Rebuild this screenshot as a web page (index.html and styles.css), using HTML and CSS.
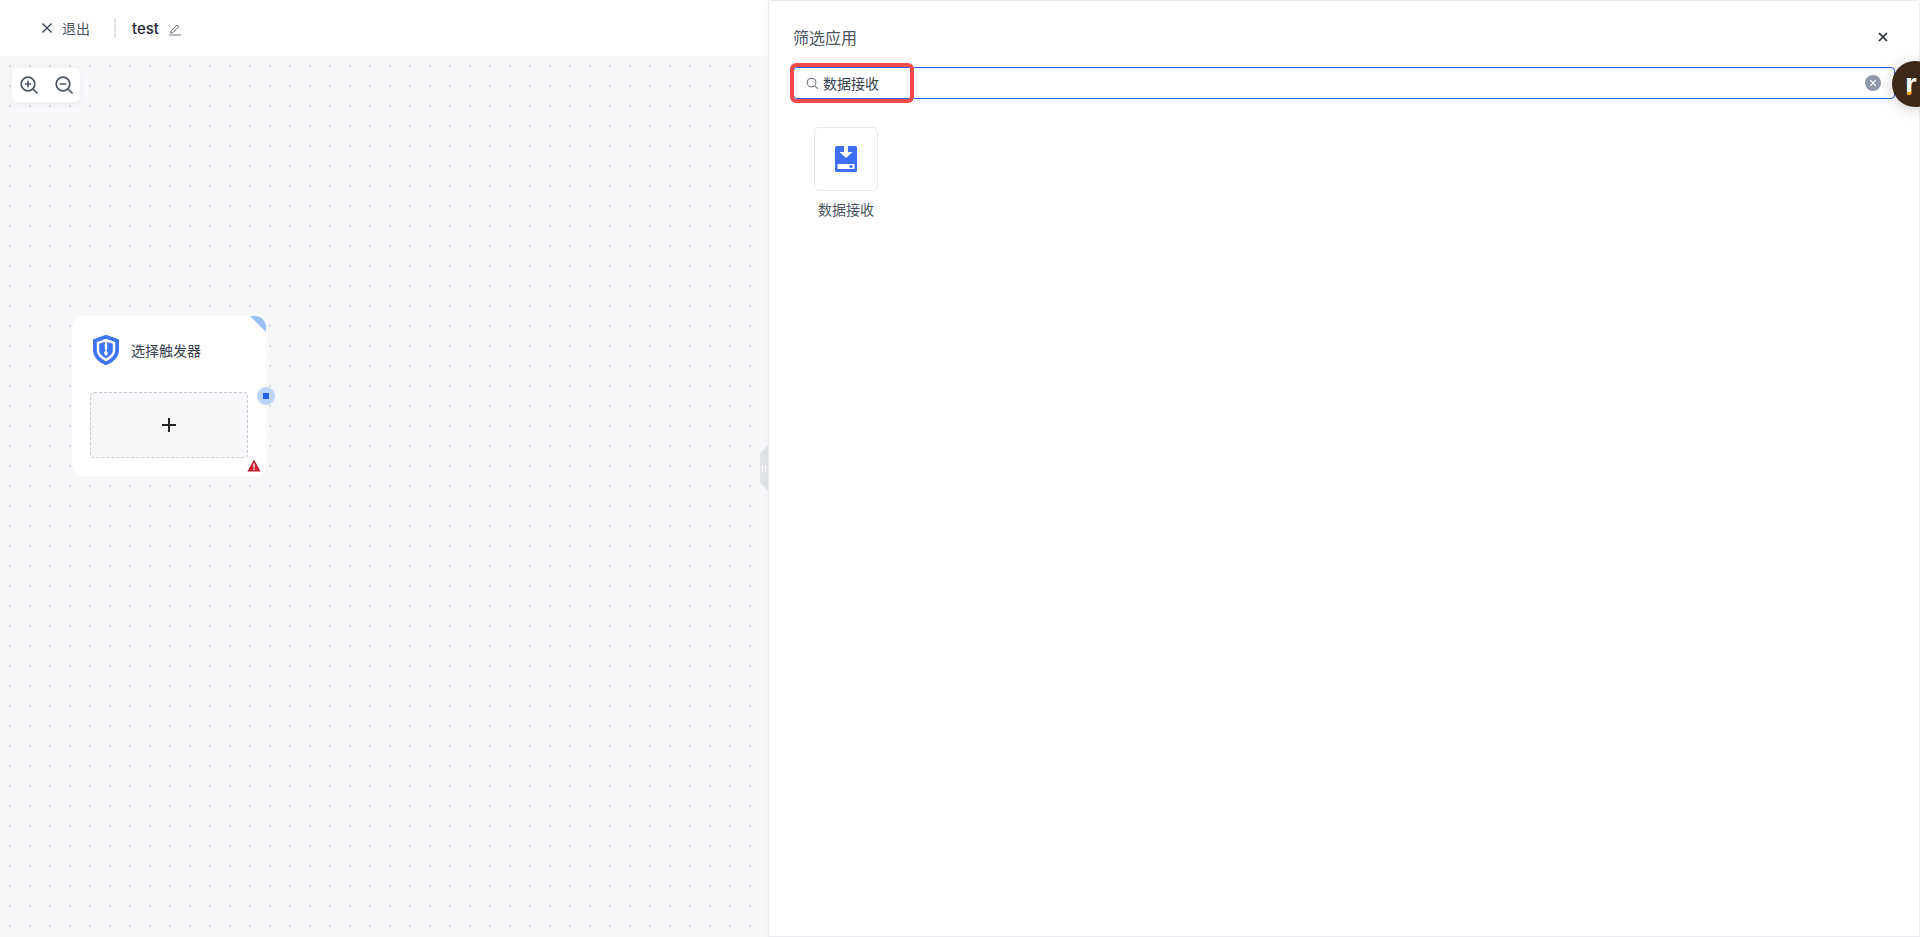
FILE: index.html
```html
<!DOCTYPE html>
<html lang="zh">
<head>
<meta charset="utf-8">
<title>test</title>
<link rel="stylesheet" href="styles.css">
</head>
<body>
<div class="app">
  <div class="editor">
    <header class="topbar">
      <button class="exit">
        <svg class="exit-icon" viewBox="0 0 12 12"><path d="M1.500 1.500l9 9M10.500 1.500l-9 9"/></svg>
        <span>退出</span>
      </button>
      <span class="divider"></span>
      <span class="name">test</span>
      <svg class="edit-icon" viewBox="0 0 14 14"><path d="M3 9.200L9 3l1.800 1.700-6.200 6.100-2 .2zM1 13h12"/></svg>
    </header>
    <main class="canvas">
      <div class="zoom">
        <svg class="zoom-icon" viewBox="0 0 20 20"><circle cx="9" cy="9" r="6.800"/><path d="M14 14l4.500 4.500M9 5.800v6.400M5.800 9h6.400"/></svg>
        <svg class="zoom-icon" viewBox="0 0 20 20"><circle cx="9" cy="9" r="6.800"/><path d="M14 14l4.500 4.500M5.800 9h6.400"/></svg>
      </div>
      <div class="node">
        <span class="node-corner"></span>
        <div class="node-head">
          <svg class="shield" viewBox="0 0 28 32">
            <path class="shield-outer" d="M14 .8l13 4.700v10.500c0 7-5.800 12.300-13 15.300C6.800 28.300 1 23 1 16V5.500z"/>
            <path class="shield-inner" d="M14 4.800l9.200 3.300v8.100c0 5-4.100 8.400-9.200 11.200-5.100-2.800-9.200-6.200-9.200-11.200V8.100z"/>
            <path class="shield-outer" d="M14 7.400l6.800 2.400v6.400c0 3.600-3 6-6.800 8.200-3.800-2.200-6.800-4.600-6.800-8.200V9.800z"/>
            <path class="shield-inner" d="M12.800 7.500h2.400v7.500l-.7 1.800 1.700 3L14 22l-2.200-2.800 1.700-3-.7-1.800z"/>
          </svg>
          <span class="node-title">选择触发器</span>
        </div>
        <div class="node-add">
          <svg class="plus" viewBox="0 0 14 14"><path d="M7 0v14M0 7h14"/></svg>
        </div>
        <span class="port"><span class="port-dot"></span></span>
        <svg class="warn" viewBox="0 0 14 13"><path class="warn-bg" d="M7 .5l6.600 12H.4z"/><path class="warn-mark" d="M6.200 4.500h1.600v4.200H6.200zM6.200 9.500h1.600v1.500H6.200z"/></svg>
      </div>
      <span class="handle"><span class="handle-bars"></span></span>
    </main>
  </div>
  <aside class="panel">
    <div class="panel-head">
      <h2 class="panel-title">筛选应用</h2>
      <svg class="panel-close" viewBox="0 0 10 10"><path d="M1 1l8 8M9 1L1 9"/></svg>
    </div>
    <div class="search">
      <svg class="search-icon" viewBox="0 0 14 14"><circle cx="6" cy="6" r="4.700"/><path d="M9.500 9.500l3.300 3.300"/></svg>
      <span class="search-text">数据接收</span>
      <span class="search-clear">
        <svg viewBox="0 0 10 10"><path d="M1.500 1.500l7 7M8.500 1.500l-7 7"/></svg>
      </span>
      <span class="highlight"></span>
    </div>
    <div class="apps">
      <div class="app-item">
        <span class="app-tile">
          <svg class="app-icon" viewBox="0 0 22 26">
            <rect class="app-icon-bg" width="22" height="26" rx="1.500"/>
            <path class="app-icon-slot" d="M9 0h4v6h4.500L11 12 4.500 6H9z"/>
            <rect class="app-icon-slot" x="2.500" y="18" width="17" height="5"/>
            <rect class="app-icon-bg" x="14.500" y="19.200" width="3" height="2.600"/>
          </svg>
        </span>
        <span class="app-label">数据接收</span>
      </div>
    </div>
    <span class="avatar"><span class="avatar-r">r</span></span>
  </aside>
</div>
</body>
</html>
```
FILE: styles.css
```css
* { box-sizing: border-box; }
html, body { margin: 0; height: 100%; overflow: hidden; }
body {
  font-family: Inter, "Noto Sans CJK SC", "Noto Sans", sans-serif;
  font-size: 14px;
  color: #1f2937;
  background: #fff;
}
svg { display: block; fill: none; }

.app { display: flex; height: 937px; }
.editor { width: 768px; flex: none; display: flex; flex-direction: column; }

.topbar {
  height: 56px;
  flex: none;
  display: flex;
  align-items: center;
  padding: 0 0 0 41px;
  background: #fff;
}
.exit {
  display: flex;
  align-items: center;
  gap: 9px;
  padding: 0;
  border: 0;
  background: none;
  font: inherit;
  color: #4b5563;
}
.exit-icon { width: 12px; height: 12px; stroke: #374151; stroke-width: 1.300; }
.divider { width: 2px; height: 20px; margin: 0 16px 0 24px; background: #e1e4ea; }
.name { font-weight: 500; font-size: 15px; color: #1f2937; }
.edit-icon { width: 14px; height: 14px; margin-left: 9px; margin-top: 2px; stroke: #6b7280; stroke-width: 1; }

.canvas {
  position: relative;
  flex: 1;
  background-color: #f7f8fa;
  background-image: radial-gradient(circle, #dadce1 1px, transparent 1.100px);
  background-size: 20px 20px;
  background-position: 0 0;
}
.zoom {
  position: absolute;
  left: 12px;
  top: 12px;
  width: 68px;
  height: 34px;
  display: flex;
  align-items: center;
  justify-content: space-between;
  padding: 0 6px 0 7px;
  background: #fff;
  border-radius: 5px;
  box-shadow: 0 2px 8px rgba(31, 41, 55, .06);
}
.zoom-icon { width: 20px; height: 20px; stroke: #4b5563; stroke-width: 1.700; }

.node {
  position: absolute;
  left: 72px;
  top: 260px;
  width: 194px;
  height: 160px;
  padding: 18px;
  background: #fff;
  border-radius: 11px;
}
.node-corner {
  position: absolute;
  right: 0;
  top: 0;
  width: 16px;
  height: 16px;
  background: #9ac0f5;
  clip-path: polygon(0 0, 100% 100%, 100% 0);
  border-top-right-radius: 11px;
}
.node-head { display: flex; align-items: center; gap: 10px; height: 32px; padding-left: 1px; }
.shield { width: 30px; height: 32px; flex: none; }
.shield-outer { fill: #3f73f6; }
.shield-inner { fill: #fff; }
.node-title { font-size: 14px; color: #374151; }
.node-add {
  display: flex;
  align-items: center;
  justify-content: center;
  height: 66px;
  margin-top: 26px;
  background: #f7f8fa;
  border: 1px dashed #c9cbd0;
  border-radius: 4px;
}
.plus { width: 14px; height: 14px; stroke: #262626; stroke-width: 2; }
.port {
  position: absolute;
  right: -9px;
  top: 71px;
  width: 18px;
  height: 18px;
  display: flex;
  align-items: center;
  justify-content: center;
  background: #bcd3fb;
  border-radius: 50%;
}
.port-dot { width: 6px; height: 6px; background: #2563eb; }
.warn { position: absolute; right: 5px; bottom: 4px; width: 14px; height: 13px; }
.warn-bg { fill: #c8202f; }
.warn-mark { fill: #fbe3e5; }

.handle {
  position: absolute;
  right: 0;
  top: 389px;
  width: 8px;
  height: 46px;
  display: flex;
  align-items: center;
  justify-content: center;
  background: #e3e5ea;
  clip-path: polygon(100% 0, 100% 100%, 0 82%, 0 18%);
}
.handle-bars { width: 4px; height: 7px; border-left: 1px solid #fff; border-right: 1px solid #fff; }

.panel {
  position: relative;
  flex: 1;
  display: flex;
  flex-direction: column;
  padding: 0 24px 0 24px;
  background: #fff;
  border: 1px solid #e9ebef;
  border-right-color: #f0f1f4;
  border-radius: 3px 3px 0 0;
  box-shadow: -2px 0 6px rgba(31, 41, 55, .04);
}
.panel-head {
  display: flex;
  align-items: center;
  justify-content: space-between;
  height: 66px;
  padding: 10px 7px 4px 0;
  flex: none;
}
.panel-title { margin: 0; font-size: 16px; font-weight: 400; color: #4b5563; }
.panel-close { width: 10px; height: 10px; stroke: #1f2937; stroke-width: 1.700; }

.search {
  position: relative;
  display: flex;
  align-items: center;
  flex: none;
  width: 1102px;
  height: 32px;
  padding: 0 13px 0 12px;
  border: 1px solid #2563eb;
  border-radius: 4px;
}
.search-icon { width: 13px; height: 13px; margin-right: 4px; stroke: #6b7280; stroke-width: 1.100; }
.search-text { flex: 1; font-size: 14px; color: #374151; }
.search-clear {
  display: flex;
  align-items: center;
  justify-content: center;
  width: 16px;
  height: 16px;
  background: #8f98a8;
  border-radius: 50%;
}
.search-clear svg { width: 8px; height: 8px; stroke: #fff; stroke-width: 1.500; }
.highlight {
  position: absolute;
  left: -4px;
  top: -5px;
  width: 124px;
  height: 40px;
  border: 4px solid #f04a4a;
  border-radius: 6px;
}

.apps { display: flex; padding: 28px 0 0 21px; }
.app-item { display: flex; flex-direction: column; align-items: center; width: 64px; gap: 8px; }
.app-tile {
  display: flex;
  align-items: center;
  justify-content: center;
  width: 64px;
  height: 64px;
  border: 1px solid #e9ebef;
  border-radius: 5px;
}
.app-icon { width: 22px; height: 26px; }
.app-icon-bg { fill: #3f6ff6; }
.app-icon-slot { fill: #fff; }
.app-label { font-size: 14px; line-height: 22px; color: #4b5563; white-space: nowrap; }

.avatar {
  position: absolute;
  right: -19px;
  top: 60px;
  width: 46px;
  height: 46px;
  background: #3c2718;
  border-radius: 50%;
  box-shadow: 0 2px 14px rgba(0, 0, 0, .2);
}
.avatar-r {
  position: absolute;
  left: 13px;
  top: 8px;
  font-family: "Liberation Sans", sans-serif;
  font-size: 30px;
  font-weight: 700;
  line-height: 30px;
  color: #fff;
}
.avatar-r::after {
  content: "";
  position: absolute;
  left: 2px;
  top: 23px;
  width: 4px;
  height: 3px;
  background: #f59e0b;
}
```
